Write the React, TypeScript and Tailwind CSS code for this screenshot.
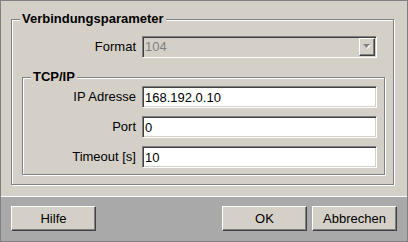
import { ChangeEvent, useState } from 'react';

const sunken =
    'border border-t-[#808080] border-l-[#808080] border-r-white border-b-white shadow-[inset_1px_1px_0_#404040,inset_-1px_-1px_0_#d4d0c8]';
const raised =
    'border border-t-white border-l-white border-r-[#404040] border-b-[#404040] shadow-[inset_-1px_-1px_0_#808080] bg-[#d4d0c8]';
const etched = 'border border-[#808080] shadow-[inset_1px_1px_0_#fff,1px_1px_0_#fff]';

interface FieldRowProps {
    label: string;
    value: string;
    onChange: (value: string) => void;
}

const FieldRow = ({ label, value, onChange }: FieldRowProps) => {
    return (
        <div className="flex items-center">
            <label className="w-[119px] pr-[6px] text-right">{label}</label>
            <input
                type="text"
                value={value}
                onChange={(e: ChangeEvent<HTMLInputElement>) => onChange(e.target.value)}
                className={`${sunken} h-[22px] w-[235px] bg-white pl-[2px] text-[13px] text-black outline-none`}
            />
        </div>
    );
};

const App = () => {
    const [settings, setSettings] = useState({
        'ip': '168.192.0.10',
        'port': '0',
        'timeout': '10',
    });

    return (
        <div className="flex h-[242px] w-[408px] flex-col border border-[#808080] bg-[#d4d0c8] font-['Liberation_Sans',Arial,sans-serif] text-[13px] text-black">
            <div className="h-[195px] pl-[10px] pt-[10px]">
                <fieldset className={`${etched} w-[383px] pb-[9px]`}>
                    <legend className="ml-[8px] bg-[#d4d0c8] px-[2px] text-[13px] font-bold leading-[16px]">Verbindungsparameter</legend>
                    <div className="mt-[9px] flex items-center">
                        <span className="w-[130px] pr-[6px] text-right">Format</span>
                        <div className={`${sunken} flex h-[22px] w-[235px] items-stretch`}>
                            <span className="flex-1 pl-[2px] leading-[20px] text-[#808080]">104</span>
                            <div className={`${raised} my-[1px] mr-[1px] flex w-[16px] items-center justify-center`}>
                                <svg width="9" height="6" viewBox="0 0 9 6">
                                    <polygon points="1,1 8,1 4.5,5" fill="#ffffff" />
                                    <polygon points="0,0 7,0 3.5,4" fill="#808080" />
                                </svg>
                            </div>
                        </div>
                    </div>
                    <fieldset className={`${etched} ml-[10px] mt-[11px] w-[363px] pb-[6px]`}>
                        <legend className="ml-[8px] bg-[#d4d0c8] px-[2px] text-[13px] font-bold leading-[16px]">TCP/IP</legend>
                        <div className="mt-[1px] flex flex-col gap-[8px]">
                            <FieldRow label="IP Adresse" value={settings.ip} onChange={(v) => setSettings({ ...settings, 'ip': v })} />
                            <FieldRow label="Port" value={settings.port} onChange={(v) => setSettings({ ...settings, 'port': v })} />
                            <FieldRow label="Timeout [s]" value={settings.timeout} onChange={(v) => setSettings({ ...settings, 'timeout': v })} />
                        </div>
                    </fieldset>
                </fieldset>
            </div>
            <div className="flex flex-1 items-start border-t border-white bg-[#a9a9a9] px-[10px] pt-[9px]">
                <button className={`${raised} h-[25px] w-[85px]`}>Hilfe</button>
                <div className="ml-auto flex gap-[5px]">
                    <button className={`${raised} h-[25px] w-[85px]`}>OK</button>
                    <button className={`${raised} h-[25px] w-[85px]`}>Abbrechen</button>
                </div>
            </div>
        </div>
    );
};

export default App;
